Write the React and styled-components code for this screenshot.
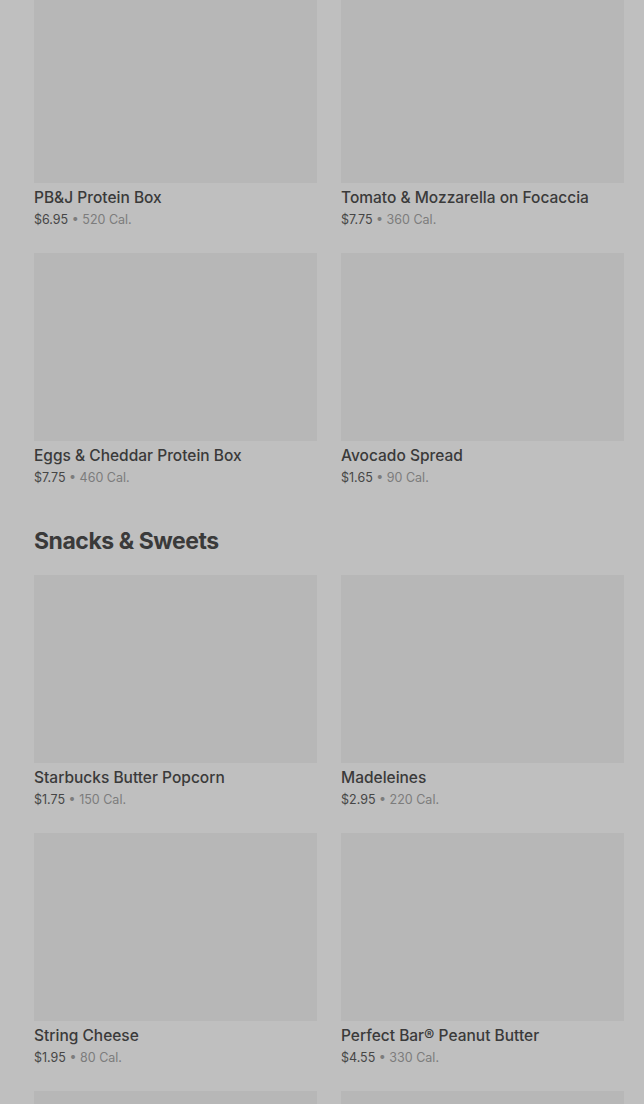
import React from 'react'
import styled, { createGlobalStyle } from 'styled-components'

const GlobalStyle = createGlobalStyle`
	html, body {
		margin: 0;
		padding: 0;
		background: #bfbfbf;
		overflow: hidden;
	}
	body {
		font-family: Inter, "Noto Sans", "Liberation Sans", sans-serif;
		-webkit-font-smoothing: antialiased;
	}
`

const sections = [
	{
		title: null,
		items: [
			{ name: 'PB&J Protein Box', price: '$6.95', cal: '520 Cal.' },
			{ name: 'Tomato & Mozzarella on Focaccia', price: '$7.75', cal: '360 Cal.' },
			{ name: 'Eggs & Cheddar Protein Box', price: '$7.75', cal: '460 Cal.' },
			{ name: 'Avocado Spread', price: '$1.65', cal: '90 Cal.' }
		]
	},
	{
		title: 'Snacks & Sweets',
		items: [
			{ name: 'Starbucks Butter Popcorn', price: '$1.75', cal: '150 Cal.' },
			{ name: 'Madeleines', price: '$2.95', cal: '220 Cal.' },
			{ name: 'String Cheese', price: '$1.95', cal: '80 Cal.' },
			{ name: 'Perfect Bar® Peanut Butter', price: '$4.55', cal: '330 Cal.' },
			{},
			{}
		]
	}
]

const MenuCard = ({ name, price, cal }) => (
	<Card>
		<Thumb />
		{name && (
			<>
				<Name>{name}</Name>
				<Meta>
					<span className='price'>{price}</span>
					<span className='cal'> • {cal}</span>
				</Meta>
			</>
		)}
	</Card>
)

export default function App() {
	return (
		<>
			<GlobalStyle />
			<Page>
				{sections.map((section, i) => (
					<Section key={i}>
						{section.title && <Heading>{section.title}</Heading>}
						<Grid>
							{section.items.map((item, j) => (
								<MenuCard key={j} {...item} />
							))}
						</Grid>
					</Section>
				))}
			</Page>
		</>
	)
}

const Page = styled('main')`
	margin-top: -5px;
	padding: 0 20px 0 34px;
	display: flex;
	flex-direction: column;
	gap: 37px;
`

const Section = styled('section')`
	display: flex;
	flex-direction: column;
	gap: 18px;
`

const Heading = styled('h2')`
	margin: 0;
	font-size: 23px;
	line-height: 32px;
	font-weight: 700;
	letter-spacing: -0.02em;
	color: #3a3a3a;
`

const Grid = styled('div')`
	display: grid;
	grid-template-columns: 283px 283px;
	column-gap: 24px;
	row-gap: 23px;
`

const Card = styled('article')`
	display: flex;
	flex-direction: column;
`

const Thumb = styled('div')`
	height: 188px;
	background: #b7b7b7;
	margin-bottom: 4px;
`

const Name = styled('h3')`
	margin: 0;
	font-size: 15.5px;
	line-height: 22px;
	font-weight: 500;
	color: #3a3a3a;
	white-space: nowrap;
`

const Meta = styled('div')`
	margin-top: 1px;
	font-size: 12.5px;
	line-height: 20px;
	white-space: nowrap;
	& > .price {
		color: #464646;
	}
	& > .cal {
		color: #7c7c7c;
	}
`
